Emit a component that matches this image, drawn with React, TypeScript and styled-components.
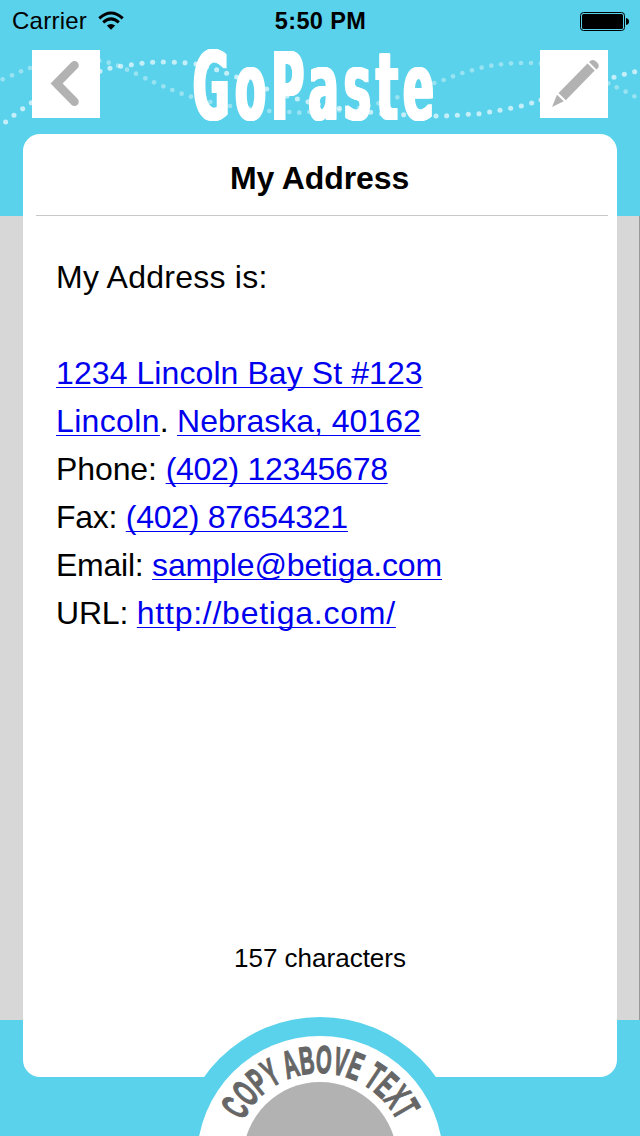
import React from "react";
import styled, { createGlobalStyle } from "styled-components";

const SKY = "#5ad2eb";

const GlobalStyle = createGlobalStyle`
  * { box-sizing: border-box; }
  body { margin: 0; background: ${SKY}; }
`;

const Screen = styled.main`
  position: relative;
  display: flex;
  flex-direction: column;
  width: 640px;
  height: 1136px;
  overflow: hidden;
  color: #000;
  font-family: "Liberation Sans", Arial, sans-serif;
  background:
    linear-gradient(#999, #999) 639px 216px / 1px 804px no-repeat,
    linear-gradient(#d7d7d7, #d7d7d7) 0 216px / 640px 804px no-repeat,
    ${SKY};
`;

const DotTrail = styled.svg`
  position: absolute;
  left: 0;
  top: 0;
`;

const StatusBar = styled.header`
  position: relative;
  display: grid;
  grid-template-columns: 1fr auto 1fr;
  align-items: center;
  height: 40px;
  padding: 2px 11px 0 12px;
  font-size: 24px;
  line-height: 28px;
`;

const Carrier = styled.div`
  display: flex;
  align-items: center;
  gap: 11px;
  letter-spacing: 0.25px;
`;

const Clock = styled.time`
  font-size: 23.5px;
  font-weight: 700;
  letter-spacing: 0.4px;
`;

const Battery = styled.svg`
  justify-self: end;
`;

const NavBar = styled.nav`
  position: relative;
  display: flex;
  justify-content: space-between;
  height: 94px;
  padding: 10px 32px 0;
`;

const IconButton = styled.button`
  width: 68px;
  height: 68px;
  padding: 0;
  border: 0;
  background: #fff;
  svg { display: block; }
`;

const Logo = styled.div`
  width: 254px;
  height: 75px;
  color: #fff;
  font-family: "DejaVu Sans Condensed", "DejaVu Sans", sans-serif;
  font-stretch: condensed;
  font-size: 94px;
  font-weight: 700;
  line-height: 75px;
  white-space: nowrap;
  span {
    display: inline-block;
    letter-spacing: 11px;
    text-shadow: 1.5px 0 #fff, -1.5px 0 #fff, 3px 0 #fff, -3px 0 #fff;
    transform: scaleX(0.525);
    transform-origin: left;
  }
`;

const Card = styled.section`
  position: relative;
  display: flex;
  flex-direction: column;
  height: 943px;
  margin: 0 23px;
  border-radius: 17px;
  background: #fff;
`;

const Title = styled.h1`
  height: 82px;
  margin: 0 9px 0 13px;
  padding-top: 25px;
  border-bottom: 1px solid #c7c7c7;
  font-size: 32px;
  line-height: 38px;
  letter-spacing: -0.1px;
  text-align: center;
  text-indent: -5px;
`;

const Snippet = styled.div`
  flex: 1;
  padding: 37px 33px 0;
  font-size: 32px;
  line-height: 48px;
`;

const Line = styled.div`
  height: 48px;
  white-space: pre;
`;

const Label = styled.span<{ $track?: number }>`
  letter-spacing: ${(p) => p.$track ?? 0}px;
`;

const Link = styled.a<{ $track?: number }>`
  color: #0000ee;
  letter-spacing: ${(p) => p.$track ?? 0}px;
  text-decoration: underline;
  text-decoration-thickness: 1px;
  text-underline-offset: 3px;
  text-decoration-skip-ink: none;
`;

const Count = styled.p`
  height: 137px;
  margin: 0;
  padding-top: 3px;
  font-size: 26px;
  line-height: 30px;
  text-align: center;
`;

const CopyButton = styled.button`
  position: absolute;
  left: 178px;
  bottom: 0;
  width: 284px;
  height: 119px;
  padding: 0;
  border: 0;
  background: none;
  svg { display: block; }
`;

const ArcLabel = styled.text`
  font-family: "Liberation Sans Narrow", "Liberation Sans", sans-serif;
  font-weight: 700;
  font-size: 39px;
  fill: #666;
  stroke: #666;
  stroke-width: 1.3px;
`;

// Dot centres, in thirds of a pixel.
const brightDots = [
  [17, 366], [42, 346], [68, 326], [94, 308], [300, 214], [330, 205], [362, 199], [394, 194],
  [426, 190], [458, 187], [490, 186], [523, 187], [555, 188], [588, 192], [620, 200], [650, 209],
  [680, 220], [710, 231], [740, 243], [770, 255], [800, 267], [830, 278], [861, 288], [892, 297],
  [924, 305], [955, 313], [986, 319], [1018, 325], [1050, 329], [1080, 333], [1112, 337],
  [1145, 341], [1178, 343], [1211, 344], [1243, 346], [1276, 347], [1308, 348], [1340, 347],
  [1372, 346], [1405, 343], [1437, 341], [1469, 336], [1500, 331], [1532, 325], [1564, 318],
  [1595, 309], [1623, 300], [1842, 232], [1873, 223], [1904, 215],
];
const faintDots = [
  [8, 238], [36, 226], [63, 214], [90, 204], [298, 182], [326, 188], [354, 197], [381, 209],
  [408, 221], [436, 235], [462, 247], [490, 259], [517, 270], [545, 281], [573, 290], [602, 298],
  [631, 306], [661, 312], [690, 318], [719, 322], [748, 326], [778, 330], [808, 333], [838, 335],
  [868, 336], [898, 338], [928, 336], [958, 334], [988, 333], [1018, 331], [1048, 328],
  [1077, 324], [1106, 318], [1135, 310], [1164, 301], [1192, 292], [1220, 281], [1247, 270],
  [1274, 259], [1303, 249], [1331, 240], [1359, 229], [1387, 219], [1416, 211], [1445, 203],
  [1474, 197], [1503, 193], [1533, 190], [1563, 189], [1593, 189], [1623, 191], [1825, 250],
  [1850, 262], [1877, 275], [1903, 289],
];

export default function App() {
  return (
    <>
      <GlobalStyle />
      <Screen>
        <DotTrail width="640" height="134" viewBox="0 0 1920 402" aria-hidden>
          <g fill="#fff" fillOpacity="0.65">
            {brightDots.map(([x, y]) => <circle key={x} cx={x} cy={y} r="7.6" />)}
          </g>
          <g fill="#fff" fillOpacity="0.38">
            {faintDots.map(([x, y]) => <circle key={x} cx={x} cy={y} r="7" />)}
          </g>
        </DotTrail>

        <StatusBar>
          <Carrier>
            <span>Carrier</span>
            <svg width="26" height="20" viewBox="0 0 26 20" fill="none" stroke="#000" strokeWidth="3">
              <path d="M1.3 7.3Q13-3.3 24.7 7.3" />
              <path d="M5.2 11.3Q13 4.5 20.8 11.3" />
              <path d="M8.8 14.6Q13 11.4 17.2 14.6L13 18.8Z" fill="#000" stroke="none" />
            </svg>
          </Carrier>
          <Clock>5:50 PM</Clock>
          <Battery width="49" height="19" viewBox="0 0 49 19">
            <rect x="0.5" y="0.5" width="44" height="18" rx="3" fill="none" stroke="#000" />
            <rect x="2" y="2" width="41" height="15" rx="1.5" />
            <path d="M46 6Q49 6.5 49 9.5T46 13Z" />
          </Battery>
        </StatusBar>

        <NavBar>
          <IconButton aria-label="Back">
            <svg width="68" height="68" fill="none" stroke="#b2b2b2" strokeWidth="8.6" strokeLinecap="round">
              <path d="M42.5 15.3L24.6 33.5L42.5 51.7" />
            </svg>
          </IconButton>
          <Logo><span>GoPaste</span></Logo>
          <IconButton aria-label="Edit">
            <svg width="68" height="68" fill="#b2b2b2">
              <path d="M12 57L17 44.8L23.8 51.3Z" />
              <path d="M18.6 43L47.5 13.5L54.7 20.6L25.8 50.2Z" />
              <path d="M49 12.1L50.5 10.8Q53.5 8.9 56.8 12.2Q60 15.5 58 18L56.4 19.4Z" />
            </svg>
          </IconButton>
        </NavBar>

        <Card>
          <Title>My Address</Title>
          <Snippet>
            <Line><Label $track={0.25}>My Address is:</Label></Line>
            <Line />
            <Line><Link $track={0.08}>1234 Lincoln Bay St #123</Link></Line>
            <Line>
              <Link $track={0.35}>Lincoln</Link><Label $track={-0.3}>{". "}</Label>
              <Link>Nebraska, 40162</Link>
            </Line>
            <Line><Label $track={-0.1}>{"Phone: "}</Label><Link $track={-0.28}>(402) 12345678</Link></Line>
            <Line><Label $track={-0.27}>{"Fax: "}</Label><Link $track={-0.28}>(402) 87654321</Link></Line>
            <Line><Label $track={-0.25}>{"Email: "}</Label><Link $track={-0.13}>sample@betiga.com</Link></Line>
            <Line><Label $track={-0.2}>{"URL: "}</Label><Link $track={0.75}>http://betiga.com/</Link></Line>
          </Snippet>
          <Count>157 characters</Count>
        </Card>

        <CopyButton aria-label="Copy above text">
          <svg width="284" height="119">
            <circle cx="142" cy="142" r="142" fill={SKY} />
            <circle cx="142" cy="142" r="123" fill="#fff" />
            <circle cx="142" cy="142" r="77" fill="#b2b2b2" />
            <path id="label-arc" d="M56 142A86 86 0 0 1 228 142" fill="none" />
            <ArcLabel textLength="191" lengthAdjust="spacingAndGlyphs">
              <textPath href="#label-arc" startOffset="39.5">COPY ABOVE TEXT</textPath>
            </ArcLabel>
          </svg>
        </CopyButton>
      </Screen>
    </>
  );
}
